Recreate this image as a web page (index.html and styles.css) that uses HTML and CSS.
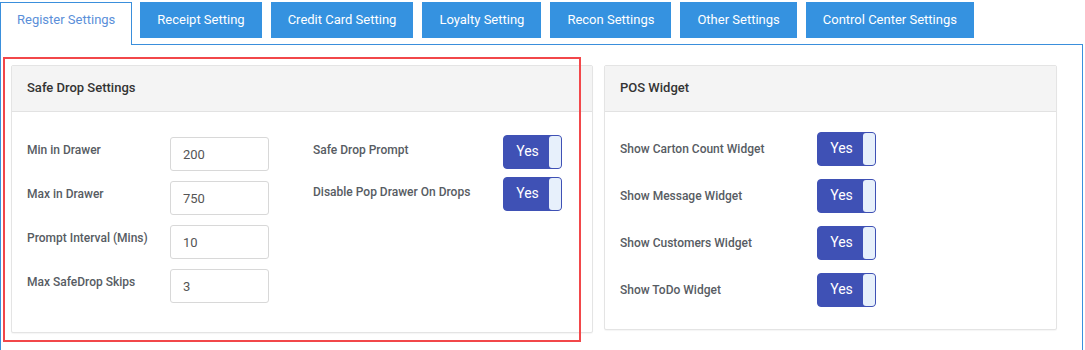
FILE: index.html
```html
<!DOCTYPE html>
<html lang="en">
<head>
  <meta charset="UTF-8" />
  <meta name="viewport" content="width=device-width, initial-scale=1.0">
  <title>Register Settings</title>
  <link rel="stylesheet" href="styles.css">
</head>
<body>
  <!-- Pestañas -->
  <div class="tabs">
    <div class="tab active">Register Settings</div>
    <div class="tab">Receipt Setting</div>
    <div class="tab">Credit Card Setting</div>
    <div class="tab">Loyalty Setting</div>
    <div class="tab">Recon Settings</div>
    <div class="tab">Other Settings</div>
    <div class="tab">Control Center Settings</div>
  </div>

  <div class="tab-pane">
    <div class="panels">
      <!-- Safe Drop -->
      <div class="panel">
        <div class="panel-heading">Safe Drop Settings</div>
        <div class="panel-body safe-drop">
          <div class="col-inputs">
            <div class="field">
              <label>Min in Drawer</label>
              <input type="text" value="200">
            </div>
            <div class="field">
              <label>Max in Drawer</label>
              <input type="text" value="750">
            </div>
            <div class="field">
              <label>Prompt Interval (Mins)</label>
              <input type="text" value="10">
            </div>
            <div class="field">
              <label>Max SafeDrop Skips</label>
              <input type="text" value="3">
            </div>
          </div>
          <div class="col-toggles">
            <div class="toggle-row">
              <label>Safe Drop Prompt</label>
              <div class="toggle"><span class="on">Yes</span><span class="handle"></span></div>
            </div>
            <div class="toggle-row">
              <label>Disable Pop Drawer On Drops</label>
              <div class="toggle"><span class="on">Yes</span><span class="handle"></span></div>
            </div>
          </div>
        </div>
      </div>

      <!-- POS Widget -->
      <div class="panel">
        <div class="panel-heading">POS Widget</div>
        <div class="panel-body widgets">
          <div class="widget-row">
            <label>Show Carton Count Widget</label>
            <div class="toggle"><span class="on">Yes</span><span class="handle"></span></div>
          </div>
          <div class="widget-row">
            <label>Show Message Widget</label>
            <div class="toggle"><span class="on">Yes</span><span class="handle"></span></div>
          </div>
          <div class="widget-row">
            <label>Show Customers Widget</label>
            <div class="toggle"><span class="on">Yes</span><span class="handle"></span></div>
          </div>
          <div class="widget-row">
            <label>Show ToDo Widget</label>
            <div class="toggle"><span class="on">Yes</span><span class="handle"></span></div>
          </div>
        </div>
      </div>
    </div>
  </div>

  <!-- Marca roja de anotación -->
  <div class="highlight"></div>
</body>
</html>
```

FILE: styles.css
```css
/* Estilos generales */
body {
  font-family: Roboto, "Liberation Sans", Arial, sans-serif;
  margin: 0;
  padding: 0;
  background-color: #fff;
  color: #333;
}

/* Pestañas */
.tabs {
  display: flex;
  align-items: flex-start;
  padding-top: 2px;
  margin-bottom: -1px;
  position: relative;
  z-index: 1;
}

.tab {
  height: 36px;
  line-height: 36px;
  padding: 0 17px;
  margin-right: 9px;
  background-color: #3592e0;
  color: #fff;
  font-size: 13px;
  white-space: nowrap;
}

.tab.active {
  height: 42px;
  line-height: 34px;
  padding: 0 16px;
  margin-right: 8px;
  background-color: #fff;
  color: #5b8fd9;
  border: 1px solid #3a8fdc;
  border-bottom: none;
}

.tab-pane {
  width: 1083px;
  box-sizing: border-box;
  border: 1px solid #3a8fdc;
  padding: 20px 10px 40px;
}

.panels {
  display: grid;
  grid-template-columns: 582px 453px;
  gap: 11px;
  align-items: start;
}

/* Paneles */
.panel {
  border: 1px solid #e4e4e4;
  border-radius: 2px;
  box-shadow: 0 1px 1px rgba(0, 0, 0, 0.04);
  background-color: #fff;
}

.panel-heading {
  height: 45px;
  line-height: 44px;
  padding: 0 15px;
  background-color: #f4f4f4;
  border-bottom: 1px solid #e2e2e2;
  font-size: 13px;
  font-weight: 500;
  color: #333;
}

.panel-body label {
  font-size: 12px;
  font-weight: 500;
  line-height: 16px;
  color: #575c63;
}

/* Safe Drop */
.safe-drop {
  display: flex;
  gap: 44px;
  padding: 25px 15px 19px;
}

.col-inputs {
  width: 242px;
}

.field {
  display: flex;
  align-items: flex-start;
  margin-bottom: 10px;
}

.field label {
  width: 143px;
  padding-top: 5px;
}

.field input {
  width: 99px;
  height: 34px;
  box-sizing: border-box;
  border: 1px solid #d8d8d8;
  border-radius: 3px;
  padding: 0 12px;
  font-family: inherit;
  font-size: 13px;
  color: #555;
  outline: none;
}

.col-toggles {
  width: 249px;
  margin-top: -2px;
}

.toggle-row {
  display: flex;
  justify-content: space-between;
  align-items: flex-start;
  margin-bottom: 8px;
}

.toggle-row label {
  padding-top: 7px;
}

/* Toggle Yes */
.toggle {
  width: 59px;
  height: 34px;
  box-sizing: border-box;
  display: flex;
  background-color: #3f51b5;
  border: 1px solid #3f51b5;
  border-radius: 4px;
}

.toggle .on {
  flex: 1;
  text-align: center;
  line-height: 30px;
  color: #fff;
  font-size: 14px;
  padding-left: 2px;
}

.toggle .handle {
  width: 12px;
  background-color: #e7f0fb;
  border-radius: 3px;
}

/* POS Widget */
.widgets {
  padding: 20px 15px 9px;
}

.widget-row {
  display: flex;
  align-items: flex-start;
  margin-bottom: 13px;
}

.widget-row label {
  width: 197px;
  padding-top: 9px;
}

/* Anotación */
.highlight {
  position: absolute;
  left: 3px;
  top: 57px;
  width: 578px;
  height: 285px;
  box-sizing: border-box;
  border: 2px solid #f2474a;
  pointer-events: none;
}
```
